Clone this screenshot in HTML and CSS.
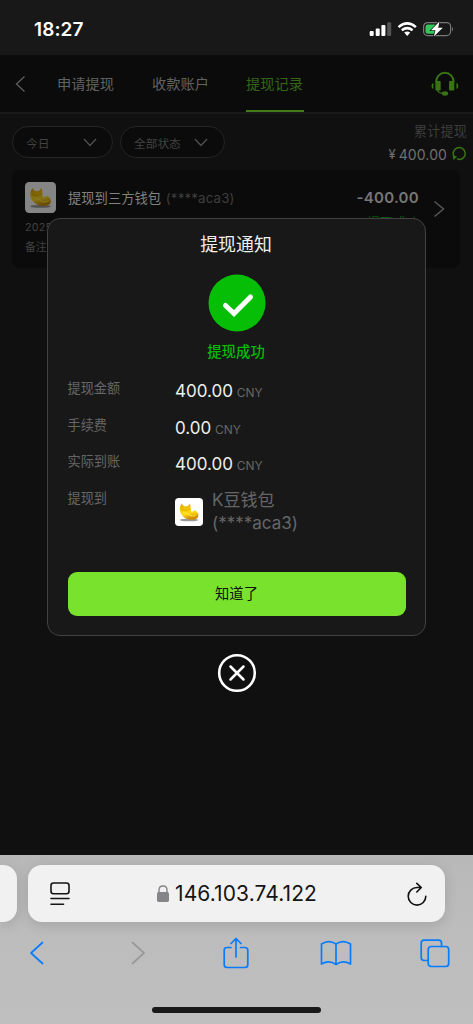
FILE: index.html
```html
<!DOCTYPE html>
<html lang="zh-CN">
<head>
<meta charset="utf-8">
<title>提现记录</title>
<link rel="stylesheet" href="styles.css">
</head>
<body>
<svg width="0" height="0" class="defs" aria-hidden="true">
  <defs>
    <linearGradient id="gold" x1="0" y1="0" x2="0.3" y2="1">
      <stop offset="0" stop-color="#d99b00"/><stop offset="0.4" stop-color="#f7c800"/><stop offset="0.7" stop-color="#ffd91c"/><stop offset="1" stop-color="#d08c00"/>
    </linearGradient>
    <symbol id="bean" viewBox="0 0 30 30">
      <rect width="30" height="30" rx="4" fill="#fff"/>
      <ellipse cx="15" cy="23.600" rx="10" ry="1.400" fill="#555" opacity=".6"/>
      <path d="M7.300 5.800C4.800 8.500 4.600 13 6.300 16.500C8.500 21 13 23.200 18.500 23.200C22.800 23.200 25.200 21.300 25 18.500C24.900 16 23 13.500 21 13.500C19.500 13.500 19.800 15 18 14.800C16 14.500 17.800 9 15.600 5.800C14.800 7.800 13.500 9 11.500 9C9.500 9 8 8 7.300 5.800Z" fill="url(#gold)"/>
      <path d="M7 11.500C8.500 13.500 13 13.800 16 11.500" fill="none" stroke="#b97c00" stroke-width="1" opacity=".45"/>
      <path d="M8.500 16C11 15.500 13.500 16.200 15.500 18C17.500 19.500 20.500 19.500 22.500 18" fill="none" stroke="#ffe93a" stroke-width="1.300" stroke-linecap="round" opacity=".7"/>
    </symbol>
  </defs>
</svg>
<div class="screen">
  <header class="status">
    <span class="time">18:27</span>
    <svg class="status-icons" width="87" height="18" viewBox="0 0 87 18">
      <g fill="#fff"><rect x=".7" y="11" width="4" height="5" rx="1"/><rect x="6.700" y="8.500" width="4" height="7.500" rx="1"/><rect x="12.400" y="5" width="4" height="11" rx="1"/><rect x="18.200" y="2.300" width="4" height="13.700" rx="1" opacity=".25"/></g>
      <g fill="none" stroke="#fff" stroke-width="2.500"><path d="M29.500 7.100Q38.200-.3 46.900 7.100"/><path d="M32.800 10.300Q38.200 6 43.600 10.300"/></g>
      <path d="M35.200 12.600Q38.200 10.500 41.200 12.600L38.200 15.900Z" fill="#fff"/>
      <rect x="54.600" y="2.600" width="27" height="13" rx="4" fill="none" stroke="#777" stroke-width="1.200"/>
      <path d="M83 7Q85.200 9.100 83 11.300Z" fill="#777"/>
      <rect x="56.500" y="4.400" width="12" height="9.400" rx="2.300" fill="#34c759"/>
      <path d="M70.500 1.500L62 10.300H66.500L64.800 16.500L73.800 7.800H69.200Z" fill="#fff" stroke="#181818" stroke-width="1.400" paint-order="stroke"/>
    </svg>
  </header>
  <nav class="tabs">
    <svg class="back" width="12" height="18" viewBox="0 0 12 18"><path d="M10.500 1.500L2.500 9L10.500 16.500" fill="none" stroke="#5a5a5a" stroke-width="1.400"/></svg>
    <span class="tab">申请提现</span>
    <span class="tab">收款账户</span>
    <span class="tab active">提现记录</span>
    <svg class="support" width="28" height="26" viewBox="0 0 28 26">
      <g fill="#387414"><rect x="4.400" y="10" width="5.300" height="9.500" rx="1"/><rect x="18" y="10" width="5.300" height="9.500" rx="1"/><path d="M2.400 12V18Q.5 17.500.5 15T2.400 12ZM25.400 12V18Q27.300 17.500 27.300 15T25.400 12Z"/><ellipse cx="14" cy="22.500" rx="3.200" ry="2.200"/></g>
      <g fill="none" stroke="#387414"><path d="M5.200 11V10.500A8.700 8.700 0 0 1 22.600 10.500V11" stroke-width="2"/><path d="M6.500 19Q7 22 12 22.500" stroke-width="1.400"/></g>
    </svg>
  </nav>
  <main class="content">
    <div class="toolbar">
      <div class="pill day"><span>今日</span><svg width="14" height="9" viewBox="0 0 14 9"><path d="M1 1L7 7.500L13 1"/></svg></div>
      <div class="pill state"><span>全部状态</span><svg width="14" height="9" viewBox="0 0 14 9"><path d="M1 1L7 7.500L13 1"/></svg></div>
      <div class="total">
        <div class="total-label">累计提现</div>
        <div class="total-value"><span>¥</span><b>400.00</b>
          <svg width="15" height="15" viewBox="0 0 15 15"><path d="M2.100 10.700A6 6 0 1 1 7.700 13.500Q6.500 13.500 5 12.700" fill="none" stroke="#387414" stroke-width="1.500"/><path d="M.8 9.500L5.200 10.400L1.400 14Z" fill="#387414"/></svg>
        </div>
      </div>
    </div>
    <section class="record">
      <svg class="record-icon" width="31" height="31"><use href="#bean"/></svg>
      <div class="record-title">提现到三方钱包 <span>(****aca3)</span></div>
      <div class="record-side"><div class="amount">-400.00</div><div class="ok">提现成功</div></div>
      <svg class="go" width="12" height="18" viewBox="0 0 12 18"><path d="M1.500 1.500L10.500 9L1.500 16.500" fill="none" stroke="#5a5a5a" stroke-width="1.400"/></svg>
      <div class="record-date">2025</div>
      <div class="record-note">备注</div>
    </section>
  </main>
  <div class="overlay">
    <section class="modal">
      <h1>提现通知</h1>
      <svg class="success" width="58" height="58" viewBox="0 0 58 58"><circle cx="29" cy="29" r="28.500" fill="#06be06"/><path d="M17.500 31.500L26 39.500L42.500 23" fill="none" stroke="#fff" stroke-width="5" stroke-linecap="round" stroke-linejoin="miter"/></svg>
      <div class="success-text">提现成功</div>
      <dl class="details">
        <dt>提现金额</dt><dd>400.00 <small>CNY</small></dd>
        <dt>手续费</dt><dd>0.00 <small>CNY</small></dd>
        <dt>实际到账</dt><dd>400.00 <small>CNY</small></dd>
        <dt>提现到</dt><dd class="wallet"><svg width="28" height="28"><use href="#bean"/></svg><span>K豆钱包<br>(****aca3)</span></dd>
      </dl>
      <button class="confirm">知道了</button>
    </section>
    <svg class="close" width="40" height="40" viewBox="0 0 40 40" fill="none" stroke="#fff" stroke-linecap="round"><circle cx="20" cy="20" r="17.800" stroke-width="2.600"/><path d="M13.500 13.500L26.500 26.500M26.500 13.500L13.500 26.500" stroke-width="2.500"/></svg>
  </div>
  <footer class="browser">
    <div class="address-row">
      <div class="previous"></div>
      <div class="address">
        <svg width="20" height="24" viewBox="0 0 20 24" fill="none" stroke="#151515" stroke-width="1.600" stroke-linecap="round"><rect x="1" y="1" width="18" height="10.700" rx="2.500"/><path d="M1 16.500H19M1 22.300H13.500"/></svg>
        <div class="url"><svg width="12" height="17" viewBox="0 0 12 17"><rect y="7" width="12" height="10" rx="1.800" fill="#858489"/><path d="M2 8V5Q2 1 6 1T10 5V8" fill="none" stroke="#858489" stroke-width="1.400"/></svg><span>146.103.74.122</span></div>
        <svg width="20" height="24" viewBox="0 0 20 24" fill="none" stroke="#111" stroke-width="1.600" stroke-linecap="round" stroke-linejoin="round"><path d="M14 5.500H10A8.800 8.800 0 1 0 18.800 14.300M9.800 1.300L14.300 5.500L9.800 10"/></svg>
      </div>
    </div>
    <div class="actions">
      <svg width="15" height="24" viewBox="0 0 15 24"><path d="M13.500 1.500L2 12L13.500 22.500"/></svg>
      <svg class="disabled" width="15" height="24" viewBox="0 0 15 24"><path d="M1.500 1.500L13 12L1.500 22.500"/></svg>
      <svg width="26" height="32" viewBox="0 0 26 32"><path d="M8 10.500H4Q1.200 10.500 1.200 13.300V27.500Q1.200 30.500 4 30.500H22Q24.800 30.500 24.800 27.500V13.300Q24.800 10.500 22 10.500H17.500M13 20V1.500M8 6.500L13 1.500L18 6.500"/></svg>
      <svg width="32" height="26" viewBox="0 0 32 26"><path d="M16 4Q9-.8 1.500 4V24Q9 19.500 16 24.500Q23 19.500 30.500 24V4Q23-.8 16 4V24.500"/></svg>
      <svg width="30" height="29" viewBox="0 0 30 29"><path d="M8 21.500H4Q1.200 21.500 1.200 18.500V4Q1.200 1.200 4 1.200H18.500Q21.500 1.200 21.500 4V7.500"/><rect x="8.200" y="7.500" width="20.500" height="20" rx="3"/></svg>
    </div>
    <div class="home"></div>
  </footer>
</div>
</body>
</html>
```

FILE: styles.css
```css
* { box-sizing: border-box; }
body { margin: 0; background: #101010; font-family: Inter, "Noto Sans CJK SC", sans-serif; }
.defs { position: absolute; }
.screen { position: relative; width: 473px; height: 1024px; display: flex; flex-direction: column; overflow: hidden; background: #101010; }
svg { display: block; flex: none; }
.status { height: 55px; flex: none; background: #181818; display: flex; justify-content: space-between; padding: 17px 15px 0 34px; }
.time { color: #fff; font-size: 19px; line-height: 25px; font-weight: 600; letter-spacing: .1px; }
.status-icons { margin-top: 3px; margin-right: -14px; width: 103px; padding-right: 16px; }
.tabs { height: 59px; flex: none; background: #0b0b0b; border-bottom: 2px solid #191919; display: flex; padding-left: 14px; }
.back { margin: 20px 31px 0 0; }
.tab { width: 58px; margin-right: 36px; padding-top: 19px; height: 57px; font-size: 14.2px; line-height: 20px; letter-spacing: .1px; color: #626262; white-space: nowrap; }
.tab.active { color: #346716; border-bottom: 2px solid #407b18; }
.support { margin: 16px 0 0 91px; }
.back + .tab { margin-right: 37px; }
.content { flex: 1; }
.toolbar { height: 56px; display: flex; padding: 12px 6px 0 12px; }
.pill { height: 32px; border: 1px solid #242424; border-radius: 16px; background: #0b0b0b; display: flex; align-items: center; justify-content: space-between; padding: 0 15px 0 13px; font-size: 11.7px; color: #424242; }
.pill svg { fill: none; stroke: #505050; stroke-width: 1.3; }
.day { width: 101px; margin-right: 7px; }
.state { width: 105px; padding: 0 16px 0 13px; }
.total { margin-left: auto; margin-top: -4px; text-align: right; }
.total-label { color: #3d3d3d; font-size: 13.2px; line-height: 19px; letter-spacing: .1px; }
.total-value { color: #707070; display: flex; align-items: center; justify-content: flex-end; height: 26px; font-size: 14px; letter-spacing: .1px; }
.total-value span { font-size: 13px; }
.total-value b { font-weight: 400; margin: 0 5px 0 3px; }
.total-value svg { margin-top: -2px; }
.record { margin: 0 13px 0 12px; height: 98px; background: #0b0b0b; border-radius: 7px; padding: 12px 14px 0 13px; display: grid; grid-template-columns: 43px 1fr auto 25px; grid-template-rows: 33px 25px 17px; }
.record-icon { opacity: .5; }
.record-title { font-size: 13.3px; line-height: 33px; color: #818181; white-space: nowrap; }
.record-title span { color: #3e3e3e; letter-spacing: .15px; margin-left: 1px; }
.record-side { text-align: right; font-size: 13px; color: #04590a; margin-right: 2px; }
.amount { color: #777; font-size: 15px; line-height: 32px; font-weight: 600; letter-spacing: .3px; }
.ok { line-height: 17px; }
.go { margin: 18px 0 0 12px; }
.record-date, .record-note { grid-column: 1 / 3; color: #414141; font-size: 10.8px; }
.record-date { line-height: 26px; letter-spacing: .2px; }
.record-note { line-height: 15px; }
.overlay { position: absolute; left: 47px; top: 218px; width: 379px; display: flex; flex-direction: column; align-items: center; }
.modal { width: 379px; height: 418px; background: #181818; border: 1px solid #424242; border-radius: 13px; padding: 13px 19px; display: flex; flex-direction: column; align-items: center; }
h1 { margin: 0 1px 0 0; font-weight: 400; font-size: 17.9px; line-height: 25px; color: #eee; }
.success { margin-top: 17px; }
.success-text { margin: 10px 1px 0 0; color: #06ba06; font-weight: 500; font-size: 14.4px; line-height: 20px; }
.details { width: 100%; margin: 11px 0 0; display: grid; grid-template-columns: 108px 1fr; grid-template-rows: repeat(4, 36.6px); color: #666; }
.details dt { font-size: 13.2px; line-height: 30px; padding-left: .5px; }
.details dd { margin: 0; color: #eee; font-size: 17px; line-height: 36px; white-space: nowrap; }
.details small { font-size: 12px; color: #666; letter-spacing: 0; margin-left: -1px; }
.details .wallet { display: flex; align-items: center; gap: 9px; color: #666; line-height: 22.5px; height: 58px; font-size: 17px; }
.wallet span { letter-spacing: 0; }
.confirm { margin-top: 53px; width: 338px; height: 44px; flex: none; border: 0; border-radius: 9px; background: #79e22c; color: #111; font: 14.3px/20px Inter, "Noto Sans CJK SC", sans-serif; }
.close { margin-top: 17px; }
.browser { height: 169px; flex: none; background: linear-gradient(#b8b8b8, #bcbcbc 60px, #bfbfbf); padding-top: 10px; }
.address-row { display: flex; gap: 11px; height: 57px; }
.previous { width: 17px; background: #f1f1f1; border-radius: 0 14px 14px 0; box-shadow: 0 3px 14px #0002; }
.address { width: 417px; background: #f1f1f1; border-radius: 14px; box-shadow: 0 3px 14px #0002; display: flex; align-items: center; justify-content: space-between; padding: 0 18px 0 22px; }
.url { display: flex; align-items: center; gap: 6px; font-size: 21px; color: #151515; letter-spacing: .1px; margin-right: 3px; }
.actions { height: 62px; display: grid; grid-template-columns: 73px 116px 94px 105px 85px; justify-items: center; align-items: center; fill: none; stroke: #087cff; stroke-width: 1.7; stroke-linecap: round; stroke-linejoin: round; }
.actions svg:nth-child(2) { margin-left: 15px; }
.actions svg:last-child { margin-left: 9px; }
.disabled { stroke: #999; }
.home { width: 169px; height: 6px; border-radius: 3px; background: #191919; margin: 23px auto 0; }
```
